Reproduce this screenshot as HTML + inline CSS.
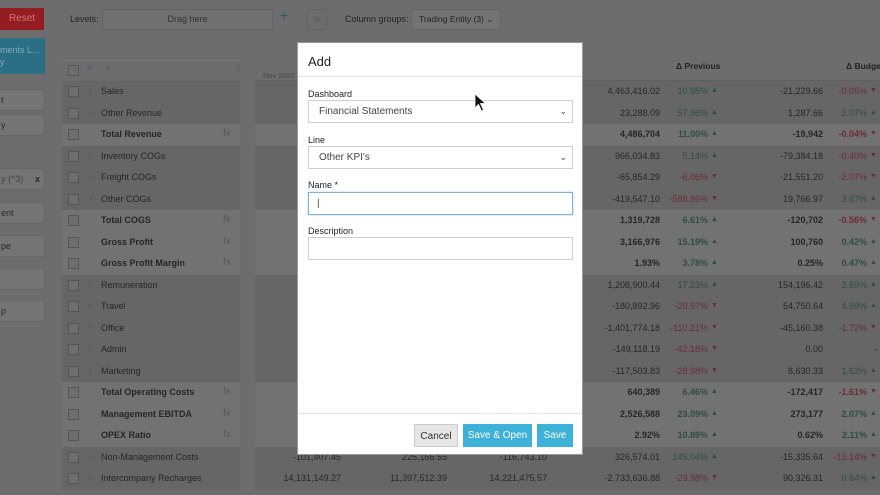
<!DOCTYPE html>
<html><head><meta charset="utf-8"><style>
*{box-sizing:border-box;margin:0;padding:0}
body{width:880px;height:495px;overflow:hidden;background:#6d6d6d;font-family:"Liberation Sans",sans-serif;position:relative;color:#222}
.a{position:absolute;white-space:nowrap}
.btn{position:absolute;left:0;width:45px;height:22px;background:#747474;border:1px solid #666;border-left:none;font-size:9px;color:#2a2a2a;line-height:20px;padding-left:1px}
.row{position:absolute;left:62px;width:818px;height:21.5px;font-size:9px;color:#262626;white-space:nowrap}
.row .l{position:absolute;left:0;width:178px;height:100%}
.row .r{position:absolute;left:193px;width:625px;height:100%}
.child .l,.child .r{background:#666}
.tot .l,.tot .r{background:#727272;font-weight:bold}
.cb{position:absolute;left:6px;top:5px;width:11px;height:11px;border:1px solid #555;background:#6e6e6e}
.chev{position:absolute;left:27px;top:4px;color:#35586a;font-size:9px}
.nm{position:absolute;left:39px;top:5px}
.fx{position:absolute;left:161px;top:4px;color:#575757;font-size:10px;font-weight:normal}
.v{position:absolute;top:5px;text-align:right}
.g{color:#2e4d45}.rd{color:#6e2a33}
.modal{position:absolute;left:297px;top:42px;width:286px;height:413px;background:#fff;border:1px solid #999}
.lab{position:absolute;left:10px;font-size:9px;color:#222}
.inp{position:absolute;left:10px;width:265px;height:23px;border:1px solid #cfcfcf;font-size:10px;color:#444;padding-left:10px;line-height:21px}
.mb{position:absolute;top:381px;height:23px;font-size:10px;line-height:23px;text-align:center;color:#fff;background:#3db1d8}
</style></head><body>
<div class="a" style="left:0;top:8px;width:44px;height:22px;background:#951c21;color:#c77;font-size:10px;line-height:22px;text-align:center">Reset</div>
<div class="a" style="left:0;top:38px;width:45px;height:36px;background:#2a6f86;color:#8ab;font-size:9px;padding-top:6px;line-height:12px">ments L...<br>y</div>
<div class="btn" style="top:89px">t</div>
<div class="btn" style="top:114px">y</div>
<div class="a" style="left:0;top:157px;width:45px;height:1px;background:#666"></div>
<div class="btn" style="top:168px;width:32px;color:#444">y (^3)</div>
<div class="btn" style="top:168px;left:31px;width:14px;font-weight:bold;padding-left:4px">x</div>
<div class="btn" style="top:202px">ent</div>
<div class="btn" style="top:235px">pe</div>
<div class="btn" style="top:268px"></div>
<div class="btn" style="top:300px">p</div>

<div class="a" style="left:70px;top:14px;font-size:9px;color:#222">Levels:</div>
<div class="a" style="left:102px;top:9px;width:171px;height:21px;background:#707070;border:1px solid #636363;font-size:9px;color:#333;text-align:center;line-height:19px">Drag here</div>
<div class="a" style="left:279px;top:8px;font-size:16px;color:#2a5f73">+</div>
<div class="a" style="left:306px;top:9px;width:21px;height:21px;border:1px solid #636363;font-size:8px;color:#555;text-align:center;line-height:19px">⁝fx</div>
<div class="a" style="left:345px;top:14px;font-size:9px;color:#222">Column groups:</div>
<div class="a" style="left:411px;top:9px;width:90px;height:21px;background:#737373;border:1px solid #636363;font-size:8.5px;color:#222;line-height:19px;padding-left:7px">Trading Entity (3) ⌄</div>

<div class="a" style="left:62px;top:60px;width:178px;height:21px;background:#6d6d6d;border-top:1px solid #777"></div>
<div class="a" style="left:68px;top:65px;width:11px;height:11px;border:1px solid #555"></div>
<div class="a" style="left:87px;top:62px;font-size:10px;color:#2a5f73">»</div>
<div class="a" style="left:105px;top:62px;font-size:10px;color:#555">«</div>
<div class="a" style="left:235px;top:65px;font-size:8px;color:#555">⠿</div>
<div class="a" style="left:263px;top:71px;font-size:7.5px;color:#444">Nov 2022</div>
<div class="a" style="left:255px;top:80px;width:625px;height:1px;background:#5f5f5f"></div>
<div class="a" style="left:676px;top:61px;font-size:8.5px;font-weight:bold;color:#222">Δ Previous</div>
<div class="a" style="left:846px;top:61px;font-size:8.5px;font-weight:bold;color:#222">Δ Budget</div>

<div id="rows"></div>
<script>
var R=[
["c","Sales","45.","4,463,416.02","10.95%",1,"-21,229.66","-0.05%",0],
["c","Other Revenue","","23,288.09","57.96%",1,"1,287.66","2.07%",1],
["t","Total Revenue","","4,486,704","11.00%",1,"-19,942","-0.04%",0],
["c","Inventory COGs","19.","966,034.83","5.14%",1,"-79,384.18","-0.40%",0],
["c","Freight COGs","1.","-65,854.29","-6.06%",0,"-21,551.20","-2.07%",0],
["c","Other COGs","","-419,547.10","-588.86%",0,"19,766.97","3.87%",1],
["t","Total COGS","","1,319,728","6.61%",1,"-120,702","-0.56%",0],
["t","Gross Profit","","3,166,976","15.19%",1,"100,760","0.42%",1],
["t","Gross Profit Margin","","1.93%","3.78%",1,"0.25%","0.47%",1],
["c","Remuneration","5.","1,208,900.44","17.23%",1,"154,196.42","2.59%",1],
["c","Travel","1.","-180,892.96","-20.97%",0,"54,750.64","4.99%",1],
["c","Office","2.","-1,401,774.18","-110.21%",0,"-45,160.38","-1.72%",0],
["c","Admin","","-149,118.19","-42.18%",0,"0.00","",2],
["c","Marketing","","-117,503.83","-28.98%",0,"8,630.33","1.62%",1],
["t","Total Operating Costs","","640,389","6.46%",1,"-172,417","-1.61%",0],
["t","Management EBITDA","","2,526,588","23.09%",1,"273,177","2.07%",1],
["t","OPEX Ratio","","2.92%","10.89%",1,"0.62%","2.11%",1],
["c","Non-Management Costs","-101,407.45","326,574.01","145.04%",1,"-15,335.64","-13.14%",0],
["c","Intercompany Recharges","14,131,149.27","-2,733,636.88","-23.98%",0,"90,326.31","0.64%",1]];
var extra={17:["225,166.55","-116,743.10"],18:["11,397,512.39","14,221,475.57"]};
var h="";
R.forEach(function(r,i){
var top=81+i*21.5,t=r[0]=="t";
h+='<div class="row '+(t?'tot':'child')+'" style="top:'+top+'px"><div class="l"><div class="cb"></div>'+(t?'':'<span class="chev">›</span>')+'<span class="nm">'+r[1]+'</span>'+(t?'<span class="fx">fx</span>':'')+'</div><div class="r">';
if(r[2])h+='<span class="v" style="right:'+(625-86)+'px">'+r[2]+'</span>';
if(extra[i]){h+='<span class="v" style="right:'+(625-192)+'px">'+extra[i][0]+'</span><span class="v" style="right:'+(625-292)+'px">'+extra[i][1]+'</span>';}
h+='<span class="v" style="right:'+(625-405)+'px">'+r[3]+'</span>';
h+='<span class="v '+(r[5]?'g':'rd')+'" style="right:'+(625-453)+'px">'+r[4]+'</span><span class="v '+(r[5]?'g':'rd')+'" style="left:456px;font-size:7px;top:6px">'+(r[5]?'▲':'▼')+'</span>';
h+='<span class="v" style="right:'+(625-568)+'px">'+r[6]+'</span>';
if(r[8]<2)h+='<span class="v '+(r[8]?'g':'rd')+'" style="right:'+(625-612)+'px">'+r[7]+'</span><span class="v '+(r[8]?'g':'rd')+'" style="left:615px;font-size:7px;top:6px">'+(r[8]?'▲':'▼')+'</span>';
else h+='<span class="v" style="left:620px">-</span>';
h+='</div></div>';});
document.getElementById('rows').innerHTML=h;
</script>

<div class="modal">
<div class="a" style="left:10px;top:11px;font-size:13px;color:#222">Add</div>
<div class="a" style="left:0;top:33px;width:100%;height:1px;background:#e3e3e3"></div>
<div class="lab" style="top:46px">Dashboard</div>
<div class="inp" style="top:57px">Financial Statements<span style="position:absolute;right:5px;top:0;font-size:9px">⌄</span></div>
<div class="lab" style="top:92px">Line</div>
<div class="inp" style="top:103px">Other KPI's<span style="position:absolute;right:5px;top:0;font-size:9px">⌄</span></div>
<div class="lab" style="top:137px">Name *</div>
<div class="inp" style="top:149px;border:1px solid #7fb4d8;box-shadow:0 0 2px #a8d0ea;padding-left:8px">|</div>
<div class="lab" style="top:183px">Description</div>
<div class="inp" style="top:194px"></div>
<div class="a" style="left:0;top:370px;width:100%;height:1px;background:#e3e3e3"></div>
<div class="mb" style="left:116px;width:44px;background:#e6e6e6;color:#333;border:1px solid #ccc">Cancel</div>
<div class="mb" style="left:165px;width:69px">Save &amp; Open</div>
<div class="mb" style="left:239px;width:36px">Save</div>
</div>
<svg class="a" style="left:474px;top:93px" width="14" height="20" viewBox="0 0 14 20"><path d="M1 1 L1 15 L4.5 11.5 L7.5 18 L9.5 17 L6.5 10.5 L11.5 10.5 Z" fill="#111" stroke="#fff" stroke-width="0.8"/></svg>
</body></html>
